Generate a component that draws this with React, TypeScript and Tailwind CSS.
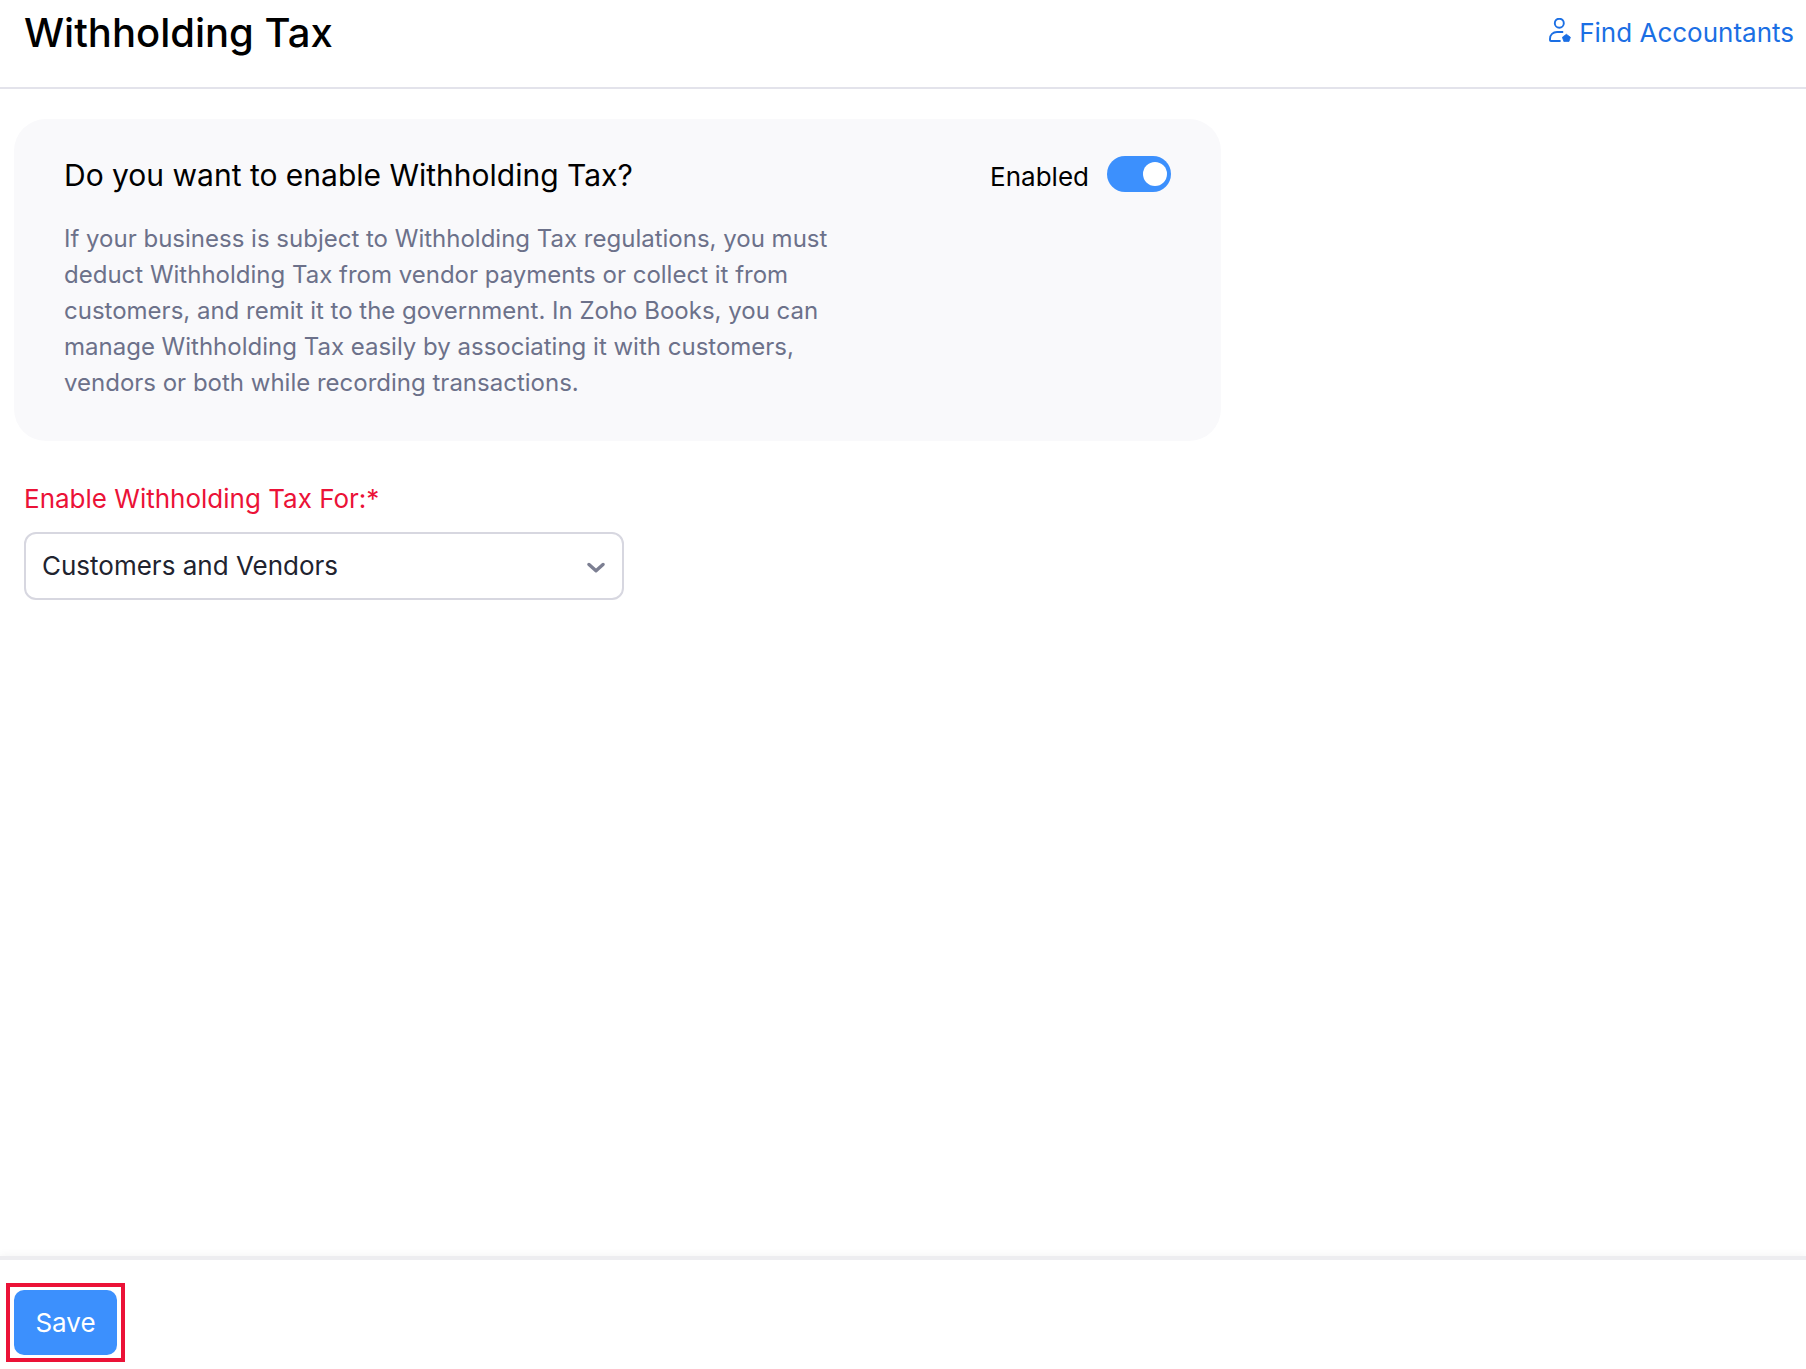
import React, { useState } from 'react'

const applicableOptions = ['Customers and Vendors', 'Customers', 'Vendors']

function AccountantIcon({ className }: { className?: string }) {
  return (
    <svg viewBox="0 0 22 24" fill="none" className={className} aria-hidden="true">
      <circle cx="10.3" cy="5.2" r="4.5" stroke="currentColor" strokeWidth="1.9" />
      <path
        d="M14.2 14H8C4 14 1 16.8 1 20.8V22.2C1 22.8 1.4 23 2 23H11.6"
        stroke="currentColor"
        strokeWidth="1.9"
      />
      <path
        d="M17.4 16.3L21.4 19.2L19.9 23.6H14.9L13.4 19.2Z"
        fill="currentColor"
        stroke="currentColor"
        strokeWidth="0.8"
        strokeLinejoin="round"
      />
    </svg>
  )
}

function Toggle({ checked, onChange }: { checked: boolean; onChange: (value: boolean) => void }) {
  return (
    <label className="flex items-center gap-[18px] cursor-pointer">
      <span className="pt-1.5 text-[26px] leading-8">{checked ? 'Enabled' : 'Disabled'}</span>
      <input
        type="checkbox"
        role="switch"
        checked={checked}
        onChange={(e) => onChange(e.target.checked)}
        className="peer sr-only"
      />
      <span className="flex h-9 w-16 items-center rounded-full bg-[#c5c7d3] px-1 peer-checked:justify-end peer-checked:bg-[#3c90fd] peer-focus-visible:ring-2">
        <span className="size-6 rounded-full bg-white" />
      </span>
    </label>
  )
}

export default function App() {
  const [enabled, setEnabled] = useState(true)
  const [applicableFor, setApplicableFor] = useState(applicableOptions[0])

  return (
    <div className="flex min-h-screen flex-col bg-white font-['Inter',sans-serif] text-black">
      <header className="flex items-start justify-between border-b-2 border-[#e3e3eb] pt-[9px] pr-3 pb-[30px] pl-6">
        <h1 className="text-[40px] leading-[48px] font-medium">Withholding Tax</h1>
        <a
          href="#accountants"
          className="flex items-center gap-2 pt-2 text-[26px] leading-8 text-[#1b6fe4]"
        >
          <AccountantIcon className="mb-1.5 h-6 w-[22px]" />
          Find Accountants
        </a>
      </header>

      <main className="flex-1 pt-[30px]">
        <section className="mx-3.5 max-w-[1207px] rounded-[32px] bg-[#f9f9fb] px-[50px] pt-9 pb-10">
          <div className="flex items-start justify-between">
            <h2 className="text-[30px] leading-10">Do you want to enable Withholding Tax?</h2>
            <Toggle checked={enabled} onChange={setEnabled} />
          </div>
          <p className="mt-[26px] max-w-[780px] text-[24px] leading-9 text-[#6c718a]">
            If your business is subject to Withholding Tax regulations, you must deduct Withholding
            Tax from vendor payments or collect it from customers, and remit it to the government.
            In Zoho Books, you can manage Withholding Tax easily by associating it with customers,
            vendors or both while recording transactions.
          </p>
        </section>

        <div className="mx-6 mt-10 max-w-[600px]">
          <label htmlFor="applicable-for" className="block text-[26px] leading-9 text-[#eb1237]">
            Enable Withholding Tax For:*
          </label>
          <div className="mt-[15px] grid items-center">
            <select
              id="applicable-for"
              value={applicableFor}
              onChange={(e) => setApplicableFor(e.target.value)}
              className="col-start-1 row-start-1 h-[68px] w-full appearance-none rounded-xl border-2 border-[#d7d7e0] bg-white px-4 pb-0.5 text-[26px] text-[#21232f]"
            >
              {applicableOptions.map((option) => (
                <option key={option}>{option}</option>
              ))}
            </select>
            <svg
              viewBox="0 0 18 12"
              fill="none"
              className="pointer-events-none col-start-1 row-start-1 mt-1 mr-[19px] h-3 w-[18px] justify-self-end"
              aria-hidden="true"
            >
              <path
                d="M2 2.5L9 8.8L16 2.5"
                stroke="#7c7f92"
                strokeWidth="3.4"
                strokeLinecap="round"
                strokeLinejoin="round"
              />
            </svg>
          </div>
        </div>
      </main>

      <footer className="border-t-4 border-[#ededf0] px-1.5 pt-[23px] pb-[7px] shadow-[0_-2px_8px_rgba(0,0,0,0.04)]">
        <div className="w-fit border-4 border-[#eb1237] px-1 py-[3px]">
          <button
            type="button"
            className="block h-[65px] min-w-[103px] rounded-[10px] bg-[#3c90fd] px-5 text-[26px] text-white"
          >
            Save
          </button>
        </div>
      </footer>
    </div>
  )
}
